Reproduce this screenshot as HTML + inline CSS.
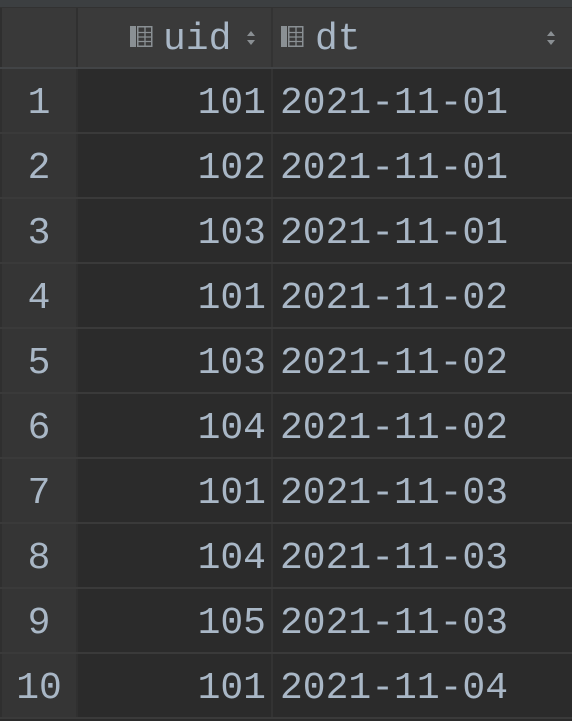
<!DOCTYPE html>
<html><head><meta charset="utf-8"><style>
html,body{margin:0;padding:0;}
body{width:572px;height:718px;background:#2b2b2b;position:relative;overflow:hidden;font-family:"Liberation Mono",monospace;color:#a9b7c6;}
.top{position:absolute;left:0;top:0;width:572px;height:7px;background:#3c3f41;border-bottom:1px solid #323232;}
.hdr{position:absolute;left:0;top:8px;width:572px;height:60px;background:#3a3a3a;}
.hline{position:absolute;left:0;width:572px;height:2px;background:#3a3a3a;}
.gut{position:absolute;left:2px;width:74px;background:#353535;}
.vl{position:absolute;top:8px;height:710px;width:2px;background:#323232;}
.t{position:absolute;font-size:38px;line-height:65px;height:65px;white-space:pre;}
</style></head><body>
<div class="top"></div>
<div class="hdr"></div>
<div style="position:absolute;left:0;top:8px;width:2px;height:710px;background:#2f2f2f"></div>
<div class="gut" style="top:8px;height:710px;background:#353535"></div>
<div style="position:absolute;left:2px;top:8px;width:74px;height:60px;background:#393939"></div>
<div class="vl" style="left:76px;background:#303030"></div>
<div class="vl" style="left:271px;background:#333"></div>
<div class="hline" style="top:67px;background:#424446;height:2px"></div>
<!-- header -->
<svg style="position:absolute;left:130px;top:26px" width="24" height="22" viewBox="0 0 24 22">
<rect x="0" y="0" width="6" height="21" fill="#8a9094"/>
<rect x="7.75" y="0.75" width="14" height="19.5" fill="none" stroke="#8a9094" stroke-width="1.5"/>
<path d="M8 6.5H22M8 11H22M8 15.5H22M15 1V20" stroke="#8a9094" stroke-width="1.3"/>
</svg>
<div class="t" style="left:163px;top:7px;">uid</div>
<svg style="position:absolute;left:246px;top:30px" width="10" height="16" viewBox="0 0 10 16"><path d="M5 1L9 6H1Z M5 15L9 10H1Z" fill="#8a8f93"/></svg>
<svg style="position:absolute;left:281px;top:26px" width="24" height="22" viewBox="0 0 24 22">
<rect x="0" y="0" width="6" height="21" fill="#8a9094"/>
<rect x="7.75" y="0.75" width="14" height="19.5" fill="none" stroke="#8a9094" stroke-width="1.5"/>
<path d="M8 6.5H22M8 11H22M8 15.5H22M15 1V20" stroke="#8a9094" stroke-width="1.3"/>
</svg>
<div class="t" style="left:315px;top:7px;">dt</div>
<svg style="position:absolute;left:546px;top:30px" width="10" height="16" viewBox="0 0 10 16"><path d="M5 1L9 6H1Z M5 15L9 10H1Z" fill="#8a8f93"/></svg>
<div id="rows"></div>
<script>
var d=[["101","2021-11-01"],["102","2021-11-01"],["103","2021-11-01"],["101","2021-11-02"],["103","2021-11-02"],["104","2021-11-02"],["101","2021-11-03"],["104","2021-11-03"],["105","2021-11-03"],["101","2021-11-04"]];
var h="";
for(var i=0;i<10;i++){var y=69+65*i;
h+='<div class="hline" style="top:'+(y+63)+'px"></div>';
h+='<div class="t" style="left:0;width:78px;text-align:center;top:'+(y+2)+'px">'+(i+1)+'</div>';
h+='<div class="t" style="left:77px;width:189px;text-align:right;top:'+(y+2)+'px">'+d[i][0]+'</div>';
h+='<div class="t" style="left:280px;top:'+(y+2)+'px">'+d[i][1]+'</div>';}
document.getElementById("rows").innerHTML=h;
</script>
</body></html>
